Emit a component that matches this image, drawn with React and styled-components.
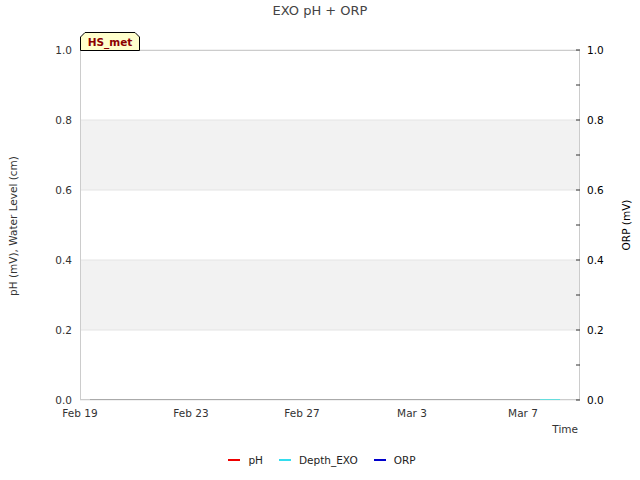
import React from "react";
import styled, { createGlobalStyle } from "styled-components";

const Global = createGlobalStyle`
  body { margin: 0; background: #fff; font-family: "DejaVu Sans", sans-serif; }
`;

const Page = styled.div`
  width: 640px;
  height: 480px;
  display: flex;
  flex-direction: column;
`;

const Title = styled.div`
  height: 22px;
  line-height: 22px;
  text-align: center;
  font-size: 13px;
  color: #444;
`;

const Legend = styled.div`
  height: 20px;
  display: flex;
  justify-content: center;
  align-items: center;
  gap: 16px;
  font-size: 10.5px;
  color: #222;
  padding-left: 4px;
`;

const Item = styled.div`
  display: flex;
  align-items: center;
  gap: 8px;
`;

const Swatch = styled.span`
  width: 12px;
  height: 2px;
  background: ${(p) => p.color};
`;

const yOf = (v) => 400 - v * 350;
const majors = [0, 0.2, 0.4, 0.6, 0.8, 1.0];
const xTicks = [
  [80, "Feb 19"],
  [191, "Feb 23"],
  [302, "Feb 27"],
  [412, "Mar 3"],
  [523, "Mar 7"],
];

function Chart() {
  const t = { fontSize: 10.5, fill: "#333", fontFamily: "DejaVu Sans, sans-serif" };
  return (
    <svg width="640" height="428" viewBox="0 22 640 428">
      <rect x="80" y={yOf(0.4)} width="500" height="70" fill="#f2f2f2" />
      <rect x="80" y={yOf(0.8)} width="500" height="70" fill="#f2f2f2" />
      {majors.map((v) => (
        <line key={v} x1="80" x2="580" y1={yOf(v)} y2={yOf(v)} stroke="#e4e4e4" />
      ))}
      <rect x="80.5" y="50.5" width="499" height="349" fill="none" stroke="#ccc" />
      <line x1="90" x2="560" y1="399.5" y2="399.5" stroke="#aaa" />
      <line x1="540" x2="560" y1="399.5" y2="399.5" stroke="#66dddd" />
      {majors.map((v) => (
        <g key={v}>
          <text {...t} x="72" y={yOf(v) + 4} textAnchor="end">{v.toFixed(1)}</text>
          <text {...t} fill="#000" x="587" y={yOf(v) + 4}>{v.toFixed(1)}</text>
          <line x1="576" x2="580" y1={yOf(v)} y2={yOf(v)} stroke="#333" />
          {v < 1 && (
            <line x1="576" x2="580" y1={yOf(v + 0.1)} y2={yOf(v + 0.1)} stroke="#333" />
          )}
        </g>
      ))}
      {xTicks.map(([x, l]) => (
        <text key={l} {...t} x={x} y="417" textAnchor="middle">{l}</text>
      ))}
      <text {...t} x="578" y="433" textAnchor="end">Time</text>
      <text {...t} x="17" y="226" textAnchor="middle" transform="rotate(-90 17 226)">
        pH (mV), Water Level (cm)
      </text>
      <text {...t} fill="#000" x="630" y="225" textAnchor="middle" transform="rotate(-90 630 225)">
        ORP (mV)
      </text>
      <polygon points="80.5,50.5 80.5,37 85,32.5 135,32.5 139.5,37 139.5,50.5" fill="#ffffcc" stroke="#000" />
      <text x="110" y="46" textAnchor="middle" fontSize="10.5" fontWeight="bold" fill="#8b0000" fontFamily="DejaVu Sans, sans-serif">
        HS_met
      </text>
    </svg>
  );
}

export default function App() {
  return (
    <Page>
      <Global />
      <Title>EXO pH + ORP</Title>
      <Chart />
      <Legend>
        <Item><Swatch color="#e00" />pH</Item>
        <Item><Swatch color="#33ddee" />Depth_EXO</Item>
        <Item><Swatch color="#00c" />ORP</Item>
      </Legend>
    </Page>
  );
}
